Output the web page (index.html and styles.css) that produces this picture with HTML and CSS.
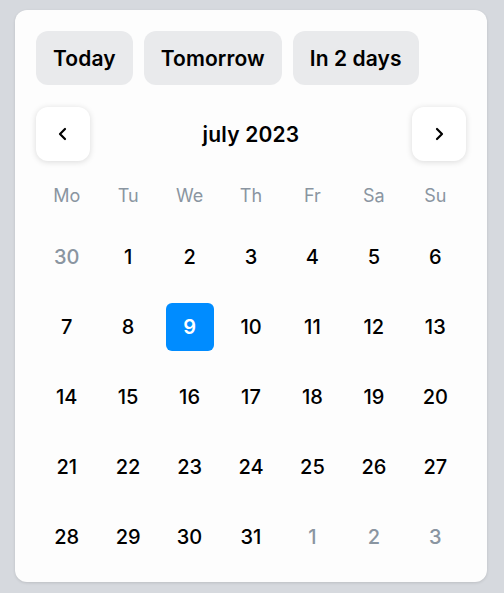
FILE: index.html
```html
<!DOCTYPE html>
<html>
<head>
<meta charset="utf-8">
<link rel="stylesheet" href="styles.css">
</head>
<body>
<div class="card">
  <div class="quick">
    <button class="chip">Today</button>
    <button class="chip">Tomorrow</button>
    <button class="chip">In 2 days</button>
  </div>
  <div class="header">
    <button class="nav" aria-label="Previous month">
      <svg width="12" height="14" viewBox="0 0 12 14"><path d="M8 2 L3 7 L8 12" fill="none" stroke="#000" stroke-width="2.2" stroke-linecap="round" stroke-linejoin="round"/></svg>
    </button>
    <div class="title">july 2023</div>
    <button class="nav" aria-label="Next month">
      <svg width="12" height="14" viewBox="0 0 12 14"><path d="M4 2 L9 7 L4 12" fill="none" stroke="#000" stroke-width="2.2" stroke-linecap="round" stroke-linejoin="round"/></svg>
    </button>
  </div>
  <div class="weekdays">
    <span>Mo</span><span>Tu</span><span>We</span><span>Th</span><span>Fr</span><span>Sa</span><span>Su</span>
  </div>
  <div class="days">
    <span class="day muted">30</span><span class="day">1</span><span class="day">2</span><span class="day">3</span><span class="day">4</span><span class="day">5</span><span class="day">6</span>
    <span class="day">7</span><span class="day">8</span><span class="day selected">9</span><span class="day">10</span><span class="day">11</span><span class="day">12</span><span class="day">13</span>
    <span class="day">14</span><span class="day">15</span><span class="day">16</span><span class="day">17</span><span class="day">18</span><span class="day">19</span><span class="day">20</span>
    <span class="day">21</span><span class="day">22</span><span class="day">23</span><span class="day">24</span><span class="day">25</span><span class="day">26</span><span class="day">27</span>
    <span class="day">28</span><span class="day">29</span><span class="day">30</span><span class="day">31</span><span class="day muted">1</span><span class="day muted">2</span><span class="day muted">3</span>
  </div>
</div>
</body>
</html>
```

FILE: styles.css
```css
html, body {
  margin: 0;
  padding: 0;
  background: #d6d9de;
  font-family: Inter, "Noto Sans", sans-serif;
}
body {
  padding: 10px 17px 11px 15px;
}
.card {
  width: 430px;
  background: #fdfdfd;
  border-radius: 12px;
  padding: 21px;
  box-shadow: 0 1px 3px rgba(0,0,0,0.12);
}
.quick {
  display: flex;
  gap: 11px;
}
.chip {
  height: 54px;
  padding: 0 17px;
  border: none;
  border-radius: 12px;
  background: #e9eaec;
  font-family: inherit;
  font-size: 21px;
  font-weight: 600;
  letter-spacing: 0.1px;
  color: #000;
}
.header {
  display: flex;
  align-items: center;
  justify-content: space-between;
  margin-top: 22px;
}
.nav {
  width: 54px;
  height: 54px;
  border: none;
  border-radius: 12px;
  background: #fff;
  box-shadow: 0 1px 6px rgba(0,0,0,0.14);
  display: flex;
  align-items: center;
  justify-content: center;
  padding: 0;
}
.title {
  font-size: 21px;
  font-weight: 600;
  letter-spacing: 0.2px;
  color: #000;
}
.weekdays {
  display: grid;
  grid-template-columns: repeat(7, 1fr);
  height: 48px;
  margin-top: 10px;
  align-items: center;
  justify-items: center;
  font-size: 18px;
  color: #8a95a1;
}
.days {
  display: grid;
  grid-template-columns: repeat(7, 1fr);
  grid-auto-rows: 48px;
  row-gap: 22px;
  margin-top: 14px;
  justify-items: center;
}
.day {
  width: 48px;
  height: 48px;
  display: flex;
  align-items: center;
  justify-content: center;
  font-size: 20px;
  font-weight: 500;
  color: #000;
  border-radius: 6px;
}
.day.muted {
  color: #8a95a1;
}
.day.selected {
  background: #008cff;
  color: #fff;
  font-weight: 600;
}
```
